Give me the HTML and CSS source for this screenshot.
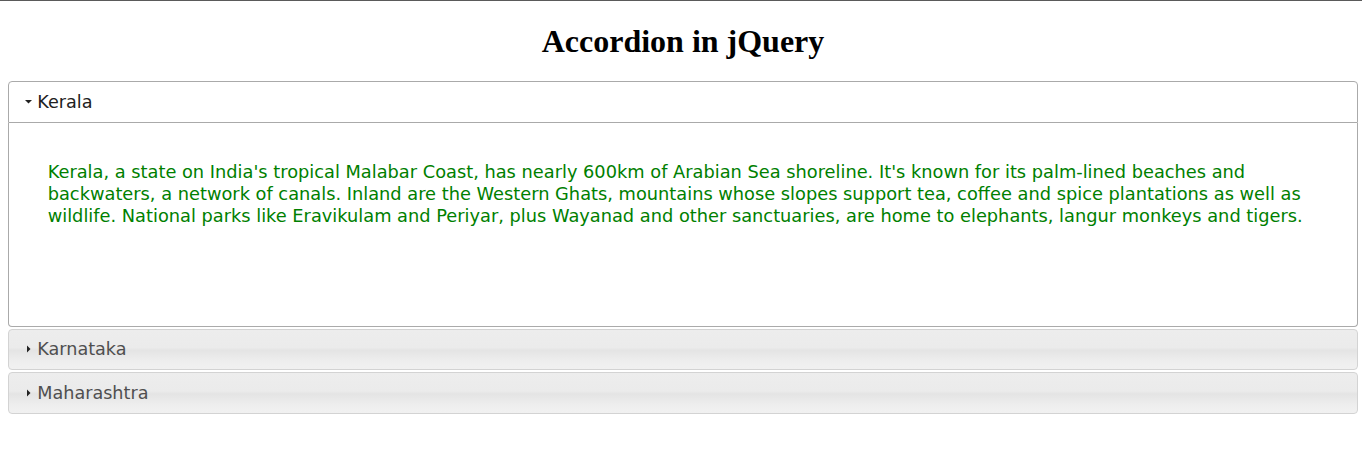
FILE: index.html
```html
<!DOCTYPE html>
<html>
<head>
<meta charset="utf-8">
<title>Accordion in jQuery</title>
<link rel="stylesheet" href="styles.css">
</head>
<body>
<h1 class="title">Accordion in jQuery</h1>
<div class="accordion">
  <h3 class="acc-header active">
    <svg class="icon" width="16" height="16" viewBox="0 0 16 16"><polygon points="4,6 11,6 7.5,9.5" fill="#222"/></svg>Kerala
  </h3>
  <div class="acc-content">
    <p>Kerala, a state on India's tropical Malabar Coast, has nearly 600km of Arabian Sea shoreline. It's known for its palm-lined beaches and backwaters, a network of canals. Inland are the Western Ghats, mountains whose slopes support tea, coffee and spice plantations as well as wildlife. National parks like Eravikulam and Periyar, plus Wayanad and other sanctuaries, are home to elephants, langur monkeys and tigers.</p>
  </div>
  <h3 class="acc-header">
    <svg class="icon" width="16" height="16" viewBox="0 0 16 16"><polygon points="6,4.5 6,11.5 9.5,8" fill="#222"/></svg>Karnataka
  </h3>
  <h3 class="acc-header">
    <svg class="icon" width="16" height="16" viewBox="0 0 16 16"><polygon points="6,4.5 6,11.5 9.5,8" fill="#222"/></svg>Maharashtra
  </h3>
</div>
</body>
</html>
```
FILE: styles.css
```css
html {
  border-top: 1px solid #5a5a5a;
}
body {
  margin: 8px 4px 8px 8px;
  background: #fff;
}
.title {
  font-family: "Liberation Serif", serif;
  font-size: 32px;
  font-weight: bold;
  text-align: center;
  margin: 14px 0 21px;
  line-height: 37px;
  color: #000;
}
.accordion {
  font-family: "DejaVu Sans", Verdana, sans-serif;
  font-size: 17.6px;
}
.acc-header {
  display: flex;
  align-items: center;
  margin: 2px 0 0;
  padding: 8.8px 8.8px 8.8px 12.3px;
  font-size: 17.6px;
  font-weight: normal;
  line-height: 22px;
  color: #4f4f4f;
  border: 1px solid #d3d3d3;
  border-radius: 4px;
  background: linear-gradient(to bottom, #ededed 0%, #ebebeb 45%, #e4e4e4 52%, #eeeeee 80%, #f1f1f1 100%);
}
.acc-header:first-child {
  margin-top: 0;
}
.acc-header.active {
  background: #fff;
  border-color: #aaa;
  color: #212121;
  border-radius: 4px 4px 0 0;
}
.icon {
  flex: none;
}
.acc-content {
  box-sizing: border-box;
  height: 204px;
  padding: 17.6px 38.7px;
  border: 1px solid #aaa;
  border-top: 0;
  border-radius: 0 0 4px 4px;
  color: #008000;
  background: #fff;
}
.acc-content p {
  margin: 21px 0 0;
  font-size: 17.8px;
  line-height: 22px;
}
```
